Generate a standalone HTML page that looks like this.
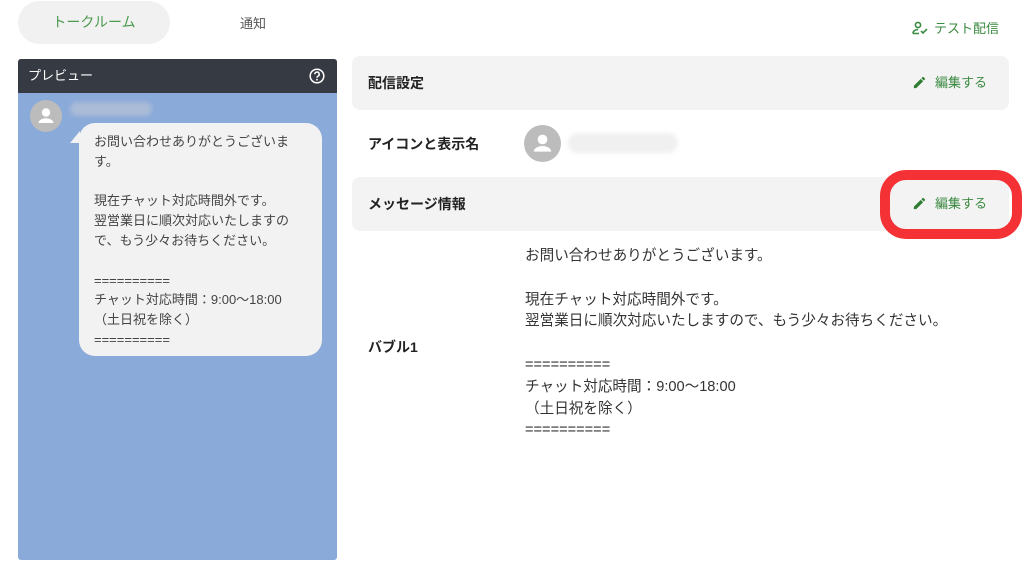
<!DOCTYPE html>
<html><head><meta charset="utf-8"><style>
*{margin:0;padding:0;box-sizing:border-box}
body{width:1024px;height:575px;background:#fff;font-family:"Liberation Sans","Noto Sans CJK JP",sans-serif;color:#333;position:relative;overflow:hidden}
.abs{position:absolute}
.tab1{left:18px;top:1px;width:152px;height:43px;background:#f1f1f1;border-radius:22px;color:#4a9a4f;font-size:14px;text-align:center;line-height:43px}
.tab2{left:240px;top:13px;font-size:13px;color:#555}
.test{left:912px;top:18px;font-size:13px;color:#3b8a41}
.prev{left:18px;top:59px;width:319px;height:501px;background:#8aaad9;border-radius:3px;overflow:hidden}
.ph{height:34px;background:#363a42;color:#fff;font-size:13px;line-height:34px;padding-left:10px;position:relative}
.av{border-radius:50%;background:#bcbcbc}
.bub{left:61px;top:64px;width:243px;height:233px;background:#f2f2f2;border-radius:16px;padding:9px 28px 9px 15px;font-size:13px;line-height:19.8px;color:#444}
.card{left:352px;width:657px;height:54px;background:#f3f3f3;border-radius:8px;font-size:14px;font-weight:bold;color:#222;line-height:54px;padding-left:16px}
.edit{position:absolute;right:22px;top:0;font-weight:normal;font-size:13px;color:#3b8a41;line-height:54px}
.edit svg{vertical-align:-3px;margin-right:8px}
.msg{left:525px;top:246px;font-size:14.6px;line-height:21.8px;color:#333}
.blur{background:#e8e8e8;border-radius:12px;filter:blur(2px)}
</style></head><body>
<div class="abs tab1">トークルーム</div>
<div class="abs tab2">通知</div>
<div class="abs test"><svg width="16" height="14" viewBox="0 0 16 14" style="vertical-align:-2px;margin-right:6px"><circle cx="6" cy="4" r="2.6" fill="none" stroke="#3b8a41" stroke-width="1.6"/><path d="M1 12.5c0-3 3-4 5-4" fill="none" stroke="#3b8a41" stroke-width="1.6"/><path d="M1 12.5h6M9 10l2 2 4-4" fill="none" stroke="#3b8a41" stroke-width="1.6"/></svg>テスト配信</div>

<div class="abs prev">
 <div class="ph">プレビュー<svg class="abs" style="right:12px;top:9px" width="16" height="16" viewBox="0 0 16 16"><circle cx="8" cy="8" r="6.8" fill="none" stroke="#fff" stroke-width="1.5"/><path d="M5.8 6.2a2.2 2.2 0 1 1 3.2 2c-.7.4-1 .8-1 1.6" fill="none" stroke="#fff" stroke-width="1.5"/><circle cx="8" cy="11.7" r=".9" fill="#fff"/></svg></div>
 <div class="abs av" style="left:12px;top:41px;width:32px;height:32px"><svg width="32" height="32" viewBox="0 0 32 32"><circle cx="16" cy="12.5" r="4.2" fill="#fff"/><path d="M8.5 23c0-3.5 5-4.8 7.5-4.8s7.5 1.3 7.5 4.8z" fill="#fff"/></svg></div>
 <div class="abs blur" style="left:52px;top:43px;width:82px;height:14px;background:#aabbd8"></div>
 <div class="abs" style="left:52px;top:72px;width:0;height:0;border-left:10px solid transparent;border-bottom:12px solid #f2f2f2"></div>
 <div class="abs bub">お問い合わせありがとうございます。<br><br>現在チャット対応時間外です。<br>翌営業日に順次対応いたしますので、もう少々お待ちください。<br><br>==========<br>チャット対応時間：9:00〜18:00<br>（土日祝を除く）<br>==========</div>
</div>

<div class="abs card" style="top:56px">配信設定<span class="edit"><svg width="15" height="15" viewBox="0 0 24 24"><path d="M3 17.25V21h3.75L17.8 9.94l-3.75-3.75zM20.7 7.04a1 1 0 0 0 0-1.41l-2.34-2.34a1 1 0 0 0-1.41 0l-1.83 1.83 3.75 3.75z" fill="#2e7d32"/></svg>編集する</span></div>
<div class="abs" style="left:368px;top:134px;font-size:14px;font-weight:bold;color:#222">アイコンと表示名</div>
<div class="abs av" style="left:524px;top:125px;width:37px;height:37px"><svg width="37" height="37" viewBox="0 0 32 32"><circle cx="16" cy="12.5" r="4.2" fill="#fff"/><path d="M8.5 23c0-3.5 5-4.8 7.5-4.8s7.5 1.3 7.5 4.8z" fill="#fff"/></svg></div>
<div class="abs blur" style="left:568px;top:133px;width:110px;height:20px;background:#f0f0f0"></div>
<div class="abs card" style="top:177px">メッセージ情報<span class="edit"><svg width="15" height="15" viewBox="0 0 24 24"><path d="M3 17.25V21h3.75L17.8 9.94l-3.75-3.75zM20.7 7.04a1 1 0 0 0 0-1.41l-2.34-2.34a1 1 0 0 0-1.41 0l-1.83 1.83 3.75 3.75z" fill="#2e7d32"/></svg>編集する</span></div>
<div class="abs" style="left:880px;top:170px;width:142px;height:69px;border:10px solid #f43236;border-radius:26px"></div>
<div class="abs" style="left:368px;top:337px;font-size:14px;font-weight:bold;color:#222">バブル1</div>
<div class="abs msg">お問い合わせありがとうございます。<br><br>現在チャット対応時間外です。<br>翌営業日に順次対応いたしますので、もう少々お待ちください。<br><br>==========<br>チャット対応時間：9:00〜18:00<br>（土日祝を除く）<br>==========</div>
</body></html>
